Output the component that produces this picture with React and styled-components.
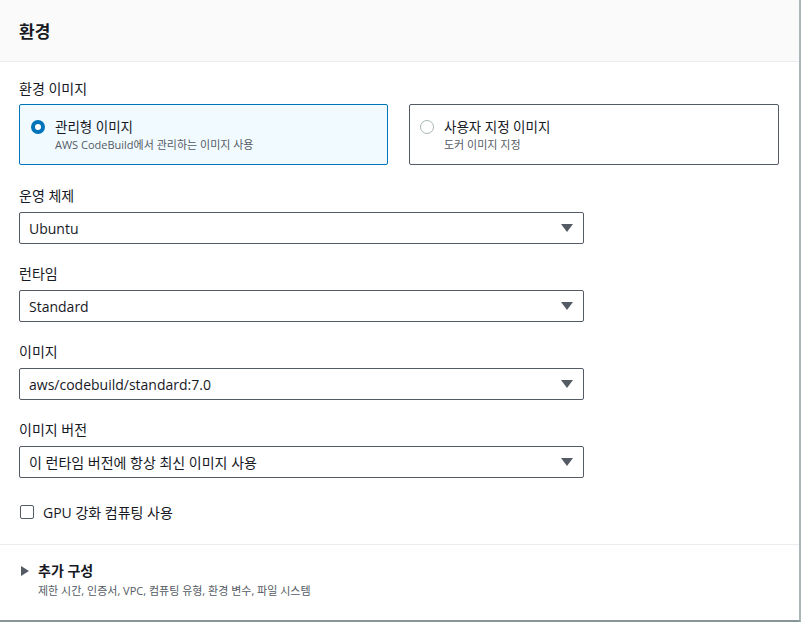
import React from 'react';
import styled, { createGlobalStyle } from 'styled-components';

const Global = createGlobalStyle`
  body { margin: 0; background: #fff; font-family: "Open Sans", "Noto Sans CJK KR", sans-serif; color: #16191f; }
`;

const Card = styled.div`
  width: 799px;
  height: 620px;
  border-right: 2px solid #aab7b8;
  border-bottom: 2px solid #879596;
  overflow: hidden;
`;

const Header = styled.div`
  height: 61px;
  background: #fafafa;
  border-bottom: 1px solid #eaeded;
  display: flex;
  align-items: center;
  padding-left: 19px;
  font-size: 17px;
  font-weight: 700;
`;

const Body = styled.div`
  padding: 17px 19px 0;
`;

const Label = styled.div`
  font-size: 14px;
  line-height: 20px;
  height: 20px;
  margin-bottom: ${p => p.$gap ?? 6}px;
`;

const Tiles = styled.div`
  display: grid;
  grid-template-columns: 369px 370px;
  gap: 21px;
  margin-bottom: 21px;
`;

const Tile = styled.div`
  height: 61px;
  box-sizing: border-box;
  border: 1px solid ${p => (p.$on ? '#0073bb' : '#545b64')};
  background: ${p => (p.$on ? '#f1faff' : '#fff')};
  border-radius: 2px;
  display: flex;
  align-items: flex-start;
  padding: 13px 0 0 ${p => (p.$on ? 11 : 10)}px;
  gap: 10px;
`;

const Radio = styled.span`
  width: 14px;
  height: 14px;
  margin-top: 2px;
  border-radius: 50%;
  box-sizing: border-box;
  border: ${p => (p.$on ? '4px solid #0073bb' : '1px solid #aab7b8')};
  background: #fff;
  flex: none;
`;

const TileTitle = styled.div`
  font-size: 13.5px;
  line-height: 18px;
  height: 18px;
`;

const TileDesc = styled.div`
  font-size: 11px;
  line-height: 17px;
  color: #545b64;
`;

const Select = styled.div`
  width: 565px;
  height: 32px;
  box-sizing: border-box;
  border: 1px solid #545b64;
  border-radius: 2px;
  display: flex;
  align-items: center;
  justify-content: space-between;
  padding: 0 10px 0 9px;
  font-size: 14px;
  margin-bottom: 20px;
`;

const Caret = styled.span`
  width: 0;
  height: 0;
  border-left: 6px solid transparent;
  border-right: 6px solid transparent;
  border-top: 8px solid #545b64;
`;

const Check = styled.div`
  display: flex;
  align-items: center;
  gap: 9px;
  font-size: 14px;
  height: 20px;
  padding: 4px 0 22px 1px;
  &::before {
    content: '';
    width: 12px;
    height: 12px;
    border: 1px solid #545b64;
    border-radius: 2px;
  }
`;

const Divider = styled.div`
  border-top: 1px solid #eaeded;
`;

const Expand = styled.div`
  padding: 16px 19px 0;
`;

const ExpandTitle = styled.div`
  display: flex;
  align-items: center;
  gap: 9px;
  font-size: 14px;
  line-height: 20px;
  height: 20px;
  font-weight: 700;
  &::before {
    content: '';
    border-top: 5px solid transparent;
    border-bottom: 5px solid transparent;
    border-left: 8px solid #545b64;
    margin-left: 2px;
  }
`;

const ExpandDesc = styled.div`
  font-size: 11px;
  line-height: 20px;
  color: #545b64;
  padding-left: 19px;
`;

const selects = [
  ['운영 체제', 'Ubuntu'],
  ['런타임', 'Standard'],
  ['이미지', 'aws/codebuild/standard:7.0'],
  ['이미지 버전', '이 런타임 버전에 항상 최신 이미지 사용'],
];

export default function App() {
  return (
    <Card>
      <Global />
      <Header>환경</Header>
      <Body>
        <Label $gap={5}>환경 이미지</Label>
        <Tiles>
          <Tile $on>
            <Radio $on />
            <div>
              <TileTitle>관리형 이미지</TileTitle>
              <TileDesc>AWS CodeBuild에서 관리하는 이미지 사용</TileDesc>
            </div>
          </Tile>
          <Tile>
            <Radio />
            <div>
              <TileTitle>사용자 지정 이미지</TileTitle>
              <TileDesc>도커 이미지 지정</TileDesc>
            </div>
          </Tile>
        </Tiles>
        {selects.map(([l, v]) => (
          <div key={l}>
            <Label>{l}</Label>
            <Select>
              {v}
              <Caret />
            </Select>
          </div>
        ))}
        <Check>GPU 강화 컴퓨팅 사용</Check>
      </Body>
      <Divider />
      <Expand>
        <ExpandTitle>추가 구성</ExpandTitle>
        <ExpandDesc>제한 시간, 인증서, VPC, 컴퓨팅 유형, 환경 변수, 파일 시스템</ExpandDesc>
      </Expand>
    </Card>
  );
}
